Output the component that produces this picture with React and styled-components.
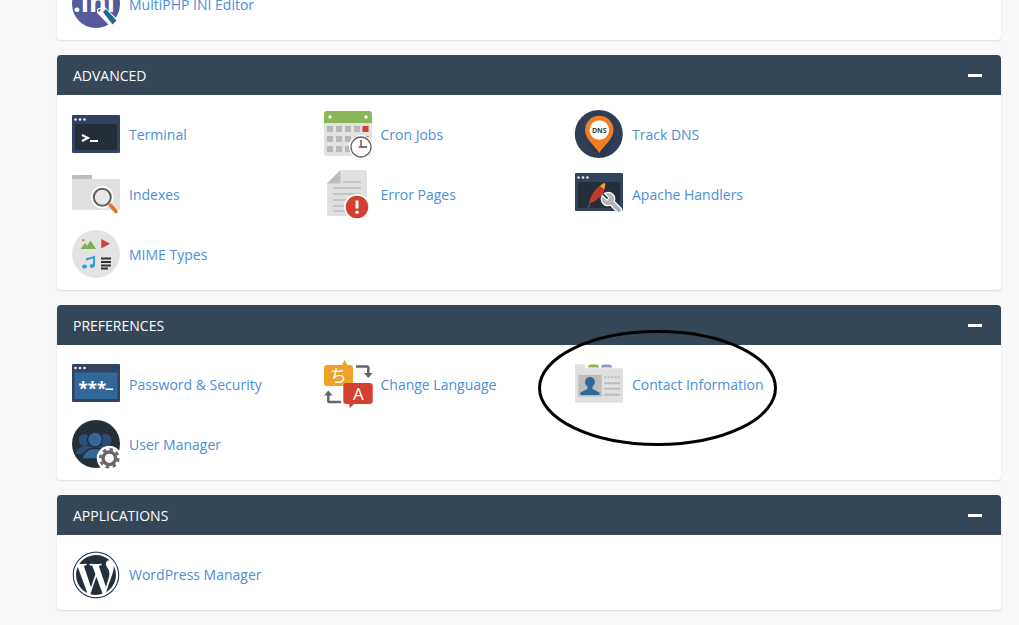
import React from "react";
import styled, { createGlobalStyle } from "styled-components";
import { FaWordpress } from "react-icons/fa";

const Global = createGlobalStyle`
  html, body { margin: 0; padding: 0; background: #f9f9f9; height: 100%; overflow: hidden; }
  body {
    font-family: "Open Sans", "Liberation Sans", sans-serif;
    font-size: 14px;
    text-rendering: optimizeLegibility;
    font-kerning: normal;
  }
`;

const Page = styled.main`
  position: relative;
  height: 625px;
  overflow: hidden;
  padding: 0 18px 0 57px;
  box-sizing: border-box;
`;
const Stack = styled.div`
  display: flex;
  flex-direction: column;
  gap: 15px;
  margin-top: -35px;
`;
const Panel = styled.section`
  background: #fff;
  border-radius: 4px;
  box-shadow: 0 1px 2px rgba(0, 0, 0, 0.12);
  overflow: hidden;
`;
const PanelHeader = styled.header`
  height: 40px;
  box-sizing: border-box;
  padding: 1px 19px 0 16px;
  background: #354657;
  color: #fff;
  display: flex;
  align-items: center;
  justify-content: space-between;
  font-size: 14px;
  line-height: 39px;
`;
const Collapse = styled.span`
  display: block;
  width: 14px;
  height: 3px;
  margin-top: -1px;
  background: #fff;
`;
const PanelBody = styled.div`
  display: grid;
  grid-template-columns: repeat(3, 251.5px);
  grid-auto-rows: 60px;
  padding: 10px 15px 5px;
`;
const Item = styled.a`
  display: flex;
  align-items: center;
  gap: 9px;
  color: #4b8fd8;
  font-size: 14px;
  line-height: 20px;
  text-decoration: none;
  white-space: nowrap;
`;
const Icon = styled.svg`
  width: 48px;
  height: 48px;
  flex: none;
  overflow: visible;
  display: block;
`;
const WpIcon = styled(FaWordpress)`
  width: 48px;
  height: 48px;
  flex: none;
  color: #232f3b;
`;
const Ring = styled.svg`
  position: absolute;
  left: 537px;
  top: 330px;
  width: 241px;
  height: 117px;
  pointer-events: none;
`;

const Svg = ({ children }) => <Icon viewBox="0 0 48 48">{children}</Icon>;
const Dots = ({ y, x = 3.5 }) => (
  <g fill="#fff" opacity=".9">
    <circle cx={x} cy={y} r="1.3" />
    <circle cx={x + 4.5} cy={y} r="1.3" />
    <circle cx={x + 9} cy={y} r="1.3" />
  </g>
);

const MultiPhp = () => (
  <Svg>
    <circle cx="24" cy="23" r="24" fill="#555a9c" />
    <text x="22" y="31" textAnchor="middle" fontFamily="Open Sans" fontWeight="700" fontSize="27" fill="#fff">.ini</text>
    <path d="M25 28l7-3 15 15-7 7-15-15z" fill="#fff" />
    <path d="M31 31l3-3 10.500 11.500-4 4z" fill="#1d6a8c" />
    <path d="M26 29l3-1-2 3z" fill="#222" />
  </Svg>
);
const Terminal = () => (
  <Svg>
    <rect x="0" y="4" width="48" height="38" rx="1" fill="#33425e" />
    <rect x="3" y="13" width="42" height="26" fill="#242f3a" />
    <Dots y={8.5} />
    <path d="M10 24l6 3-6 3" fill="none" stroke="#fff" strokeWidth="2" />
    <rect x="18" y="29" width="8" height="2" fill="#fff" />
  </Svg>
);
const Cron = () => {
  const xs = [3, 12, 21, 30, 38.5];
  const ys = [15, 25, 35];
  return (
    <Svg>
      <path d="M0 12h48v30a3 3 0 0 1-3 3H3a3 3 0 0 1-3-3z" fill="#e2e2e2" />
      <path d="M3 0h42a3 3 0 0 1 3 3v9H0V3a3 3 0 0 1 3-3z" fill="#8ab65a" />
      <circle cx="6" cy="6" r="1.700" fill="#fff" />
      <circle cx="42" cy="6" r="1.700" fill="#fff" />
      {ys.map((y, r) =>
        xs.map((x, c) => (
          <rect key={`${r}-${c}`} x={x} y={y} width="6" height="6" fill={c === 4 && r < 2 ? "#d33f30" : "#b8b8b8"} />
        ))
      )}
      <circle cx="37" cy="36" r="12" fill="#fff" />
      <circle cx="37" cy="36" r="10" fill="#fff" stroke="#666" strokeWidth="1.300" />
      <path d="M37 29v7" stroke="#444" strokeWidth="1.300" />
      <path d="M37 36h6" stroke="#444" strokeWidth="1.300" />
      <path d="M34.500 36H37" stroke="#d33f30" strokeWidth="1.300" />
    </Svg>
  );
};
const Dns = () => (
  <Svg>
    <circle cx="23.800" cy="23" r="24" fill="#2f3e55" />
    <path d="M26 8l14 22-12 17-14-12z" fill="#283648" opacity=".6" />
    <path d="M24.300 42C20 35 10 28 10 19a14.200 14.200 0 0 1 28.500 0c0 9-10 16-14.200 23z" fill="#f37b20" />
    <circle cx="24.300" cy="19" r="9.800" fill="#fff" />
    <text x="24.300" y="21.500" textAnchor="middle" fontFamily="Open Sans" fontWeight="700" fontSize="7" fill="#3b3b3b">DNS</text>
  </Svg>
);
const Indexes = () => (
  <Svg>
    <path d="M1 4h18a1 1 0 0 1 1 1v3H0V5a1 1 0 0 1 1-1z" fill="#bdbdbd" />
    <path d="M0 8h47a1 1 0 0 1 1 1v29a1 1 0 0 1-1 1H1a1 1 0 0 1-1-1z" fill="#e0e0e0" />
    <circle cx="30.300" cy="26.300" r="11.300" fill="#fff" />
    <circle cx="30.300" cy="26.300" r="8.500" fill="#e8e8e8" stroke="#616161" strokeWidth="2" />
    <path d="M37 33l1 1" stroke="#888" strokeWidth="2" />
    <path d="M38.500 34.500L44 40.500" stroke="#f26c22" strokeWidth="3.600" strokeLinecap="round" />
  </Svg>
);
const ErrorPages = () => (
  <Svg>
    <path d="M16.500-1H41a2 2 0 0 1 2 2v42a2 2 0 0 1-2 2H5a2 2 0 0 1-2-2V12.500z" fill="#e0e0e0" />
    <path d="M16.500-1V12.500H3z" fill="#bdbdbd" />
    <path d="M19 11h18M9 17h28M9 23h28M9 29h18M9 35h14M9 40h14" stroke="#bdbdbd" strokeWidth="1.600" />
    <circle cx="33" cy="36" r="13" fill="#fff" />
    <circle cx="33" cy="36" r="11.300" fill="#d33f30" />
    <path d="M33 29.500v8" stroke="#fff" strokeWidth="3" />
    <circle cx="33" cy="41.300" r="1.700" fill="#fff" />
  </Svg>
);
const Apache = () => (
  <Svg>
    <rect x="0" y="2" width="48" height="38" rx="1" fill="#33425e" />
    <rect x="3" y="11" width="42" height="26" fill="#242f3a" />
    <Dots y={6.5} />
    <path d="M14 33C15 25 21 15 30 12c1 6-2 11-5 14-3 3-7 5-11 7z" fill="#c0392b" />
    <path d="M25 15c2-2 4-3 5-3 .5 2 0 4-1 6z" fill="#f0a33a" />
    <path d="M15 32l-2 5" stroke="#3c5a9a" strokeWidth="1.200" />
    <g transform="translate(49 20) scale(-1 1)">
      <path
        d="M14.700 6.300a1 1 0 0 0 0 1.400l1.600 1.600a1 1 0 0 0 1.400 0l3.770-3.770a6 6 0 0 1-7.940 7.940l-6.910 6.910a2.120 2.120 0 0 1-3-3l6.910-6.910a6 6 0 0 1 7.940-7.940l-3.760 3.760z"
        fill="#b5b5b5"
        stroke="#fff"
        strokeWidth="2.500"
        paintOrder="stroke"
      />
    </g>
  </Svg>
);
const Mime = () => (
  <Svg>
    <circle cx="24" cy="23" r="24" fill="#e3e3e3" />
    <path d="M8.500 18l4.500-6 2.500 2.500 3-5 5.500 8.500z" fill="#7fae55" />
    <circle cx="11.300" cy="9.300" r="1.200" fill="#e8803a" />
    <path d="M29.300 8l8.700 4.700-8.700 4.700z" fill="#d33f30" />
    <path d="M14 28.500l8-2.500v9" fill="none" stroke="#2f9fdc" strokeWidth="2" />
    <ellipse cx="12.500" cy="35.500" rx="2.500" ry="2" fill="#2f9fdc" />
    <ellipse cx="20" cy="35" rx="2.500" ry="2" fill="#2f9fdc" />
    <path d="M29 27.500h10M29 31h10M29 34.500h10M29 37.500h7" stroke="#333" strokeWidth="2" />
  </Svg>
);
const Password = () => (
  <Svg>
    <rect x="0" y="3" width="48" height="38" rx="1" fill="#33425e" />
    <rect x="2.500" y="11.500" width="43" height="26.500" fill="#336699" />
    <Dots y={7} />
    <text x="6.500" y="33.500" fontFamily="Open Sans" fontWeight="700" fontSize="17" fill="#fff">***</text>
    <rect x="33.500" y="27.500" width="7.500" height="1.500" fill="#fff" />
  </Svg>
);
const Language = () => (
  <Svg>
    <path d="M3 4h15l2.500-5 3 5H26a3 3 0 0 1 3 3v15a3 3 0 0 1-3 3H3a3 3 0 0 1-3-3V7a3 3 0 0 1 3-3z" fill="#eda32a" />
    <path d="M22.300 22h23.400a3 3 0 0 1 3 3v15a3 3 0 0 1-3 3H30l-4 4-1-4h-2.700a3 3 0 0 1-3-3V25a3 3 0 0 1 3-3z" fill="#d33f30" />
    <text x="14.300" y="20.500" textAnchor="middle" fontFamily="Noto Sans CJK JP" fontSize="17" fill="#fff">ち</text>
    <text x="34.300" y="39" textAnchor="middle" fontFamily="Open Sans" fontSize="17" fill="#fff">A</text>
    <path d="M32 5.500h11a1 1 0 0 1 1.300 1V13" fill="none" stroke="#666" strokeWidth="2.500" />
    <path d="M40 12h8.600l-4.300 5z" fill="#666" />
    <path d="M17 41H5.300a1 1 0 0 1-1-1V34" fill="none" stroke="#666" strokeWidth="2.500" />
    <path d="M0 34.500h8.600l-4.300-5z" fill="#666" />
  </Svg>
);
const Contact = () => (
  <Svg>
    <path d="M13 6.500a3 3 0 0 1 3-3h5a3 3 0 0 1 3 3z" fill="#8ab65a" />
    <path d="M26 6.500a3 3 0 0 1 3-3h5a3 3 0 0 1 3 3z" fill="#8b9bc9" />
    <path d="M1 3.300h8a1 1 0 0 1 1 1v3h37a1 1 0 0 1 1 1V40.700a1 1 0 0 1-1 1H1a1 1 0 0 1-1-1V4.300a1 1 0 0 1 1-1z" fill="#e0e0e0" />
    <rect x="3.300" y="14" width="23.500" height="21.700" fill="#bdbdbd" />
    <circle cx="15" cy="21" r="5" fill="#336699" />
    <path d="M12.500 25h5v3l7 3.500v2.500h-19v-2.500l7-3.500z" fill="#336699" />
    <path d="M29 16.300h16" stroke="#bdbdbd" strokeWidth="2" strokeDasharray="2.400 1.200" />
    <path d="M29 22.300h16M29 27.700h16M29 33.700h16" stroke="#bdbdbd" strokeWidth="2" />
  </Svg>
);
const UserManager = () => (
  <Svg>
    <circle cx="24" cy="23" r="24" fill="#242f3a" />
    <circle cx="12.500" cy="19" r="6" fill="#2a4f76" />
    <circle cx="33.500" cy="19" r="6" fill="#2a4f76" />
    <path d="M4 33c0-5 4-7 8-8h22c4 1 8 3 8 8z" fill="#2a4f76" />
    <circle cx="23" cy="18.500" r="7.500" fill="#336699" stroke="#242f3a" strokeWidth="1.500" />
    <path d="M10 38c1-7 5-9 9-10.500h8c4 1.500 7 3.500 8 10.500z" fill="#336699" stroke="#242f3a" strokeWidth="1.500" />
    <circle cx="37.300" cy="37.300" r="12.500" fill="#fff" />
    <circle cx="37.300" cy="37.300" r="6.300" fill="none" stroke="#666" strokeWidth="3.400" />
    <circle cx="37.300" cy="37.300" r="9" fill="none" stroke="#666" strokeWidth="2.600" strokeDasharray="3.500 3.570" />
  </Svg>
);

const sections = [
  { id: "files", rows: [{ label: "MultiPHP INI Editor", Glyph: MultiPhp }] },
  {
    id: "adv",
    title: "ADVANCED",
    rows: [
      { label: "Terminal", Glyph: Terminal },
      { label: "Cron Jobs", Glyph: Cron },
      { label: "Track DNS", Glyph: Dns },
      { label: "Indexes", Glyph: Indexes },
      { label: "Error Pages", Glyph: ErrorPages },
      { label: "Apache Handlers", Glyph: Apache },
      { label: "MIME Types", Glyph: Mime },
    ],
  },
  {
    id: "pref",
    title: "PREFERENCES",
    rows: [
      { label: "Password & Security", Glyph: Password },
      { label: "Change Language", Glyph: Language },
      { label: "Contact Information", Glyph: Contact },
      { label: "User Manager", Glyph: UserManager },
    ],
  },
  {
    id: "apps",
    title: "APPLICATIONS",
    rows: [{ label: "WordPress Manager", Glyph: WpIcon }],
  },
];

export default function App() {
  return (
    <Page>
      <Global />
      <Stack>
        {sections.map((s) => (
          <Panel key={s.id}>
            {s.title && (
              <PanelHeader>
                {s.title}
                <Collapse />
              </PanelHeader>
            )}
            <PanelBody>
              {s.rows.map(({ label, Glyph }) => (
                <Item key={label}>
                  <Glyph />
                  {label}
                </Item>
              ))}
            </PanelBody>
          </Panel>
        ))}
      </Stack>
      <Ring viewBox="0 0 241 117">
        <ellipse cx="120.500" cy="58" rx="118" ry="56.500" fill="none" stroke="#000" strokeWidth="3" />
      </Ring>
    </Page>
  );
}
